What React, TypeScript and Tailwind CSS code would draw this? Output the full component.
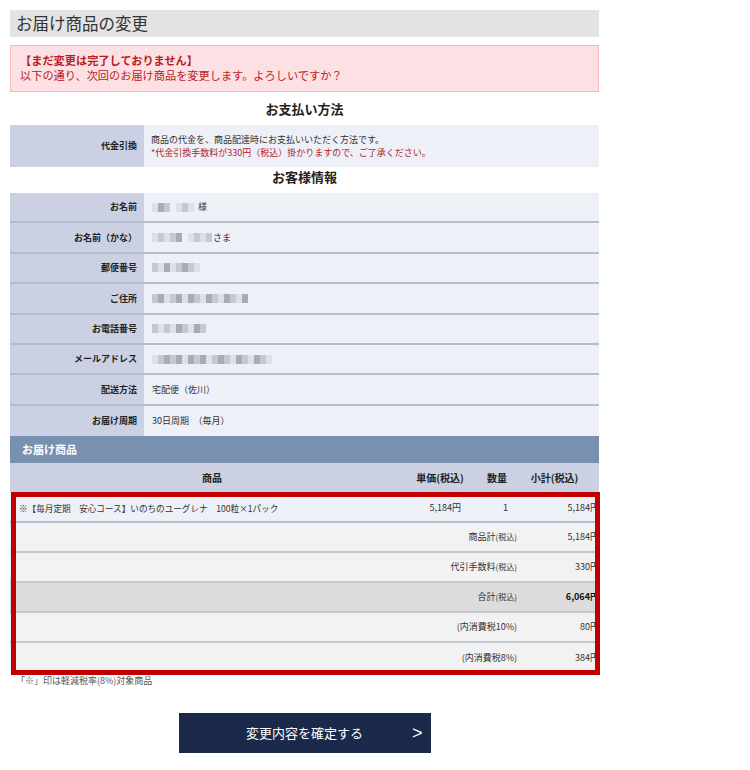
import React from "react"

const font = { fontFamily: '"Noto Sans CJK JP", "Noto Sans", sans-serif' }

// pixelated placeholder for masked personal data
function Masked({ cells }: { cells: string[] }) {
  return (
    <span className="inline-flex h-[9px] items-stretch">
      {cells.map((c, i) => (
        <span key={i} className={`w-[6px] ${c}`} />
      ))}
    </span>
  )
}

const L = "bg-[#dde0e8]"
const M = "bg-[#c4c8d3]"
const D = "bg-[#a7abb8]"
const N = "bg-transparent"

interface InfoRow {
  label: string
  value: React.ReactNode
}

const customer: InfoRow[] = [
  { label: "お名前", value: <><Masked cells={[L, D, M, N, L, M, L]} /><span className="ml-[4px]">様</span></> },
  { label: "お名前（かな）", value: <><Masked cells={[L, M, L, M, D, N, L, M, L, M]} /><span className="ml-[1px]">さま</span></> },
  { label: "郵便番号", value: <Masked cells={[M, L, D, L, M, D, M, L]} /> },
  { label: "ご住所", value: <Masked cells={[M, D, L, M, D, L, D, M, L, D, M, L, D, M, L, D]} /> },
  { label: "お電話番号", value: <Masked cells={[M, L, M, L, D, M, L, D, M]} /> },
  { label: "メールアドレス", value: <Masked cells={[L, M, D, M, D, L, D, M, D, L, M, D, M, L, D, M, L, D, M, L]} /> },
  { label: "配送方法", value: "宅配便（佐川）" },
  { label: "お届け周期", value: "30日周期　（毎月）" },
]

const summary = [
  { label: "商品計", tax: "(税込)", value: "5,184円", bg: "bg-[#f2f2f2]", bold: false },
  { label: "代引手数料", tax: "(税込)", value: "330円", bg: "bg-[#f2f2f2]", bold: false },
  { label: "合計", tax: "(税込)", value: "6,064円", bg: "bg-[#dcdcdc]", bold: true },
  { label: "(内消費税10%)", tax: "", value: "80円", bg: "bg-[#f2f2f2]", bold: false },
  { label: "(内消費税8%)", tax: "", value: "384円", bg: "bg-[#f2f2f2]", bold: false },
]

export default function App() {
  return (
    <div className="min-h-[770px] w-[750px] bg-white pt-[10px] text-[#333]" style={font}>
      <div className="ml-[10px] w-[589px]">
        <div className="flex h-[27px] items-center bg-[#e3e3e3] pl-[6px] text-[16.5px] leading-none text-[#333]">
          お届け商品の変更
        </div>

        <div className="mt-[8px] h-[47px] border border-[#f6b8bc] bg-[#fde0e3] pl-[9px] pt-[7px] text-[11.2px] leading-[15px] text-[#b81c22]">
          <p className="font-bold">【まだ変更は完了しておりません】</p>
          <p>以下の通り、次回のお届け商品を変更します。よろしいですか？</p>
        </div>

        <h2 className="flex h-[33px] items-center justify-center text-[13px] font-bold text-[#222]">お支払い方法</h2>

        <div className="flex h-[42px]">
          <div className="flex w-[134px] items-center justify-end bg-[#cbd1e3] pr-[7px] text-[9px] font-bold text-[#222]">
            代金引換
          </div>
          <div className="flex flex-1 flex-col justify-center bg-[#edf0f7] pl-[7px] text-[9px] leading-[13px]">
            <p>商品の代金を、商品配達時にお支払いいただく方法です。</p>
            <p className="text-[#b3232a]">*代金引換手数料が330円（税込）掛かりますので、ご了承ください。</p>
          </div>
        </div>

        <h2 className="flex h-[26px] items-center justify-center pb-[6px] text-[13px] font-bold text-[#222]">お客様情報</h2>

        <div>
          {customer.map((row, i) => (
            <div
              key={row.label}
              className={`flex h-[30.4px] ${i < customer.length - 1 ? "border-b-2 border-[#b5bccc]" : ""}`}
            >
              <div className="flex w-[134px] items-center justify-end bg-[#cbd1e3] pr-[7px] text-[9px] font-bold text-[#222]">
                {row.label}
              </div>
              <div className="flex flex-1 items-center bg-[#edf0f7] pl-[8px] text-[9px]">{row.value}</div>
            </div>
          ))}
        </div>

        <div className="flex h-[27px] items-center bg-[#7891b0] pl-[12px] text-[11px] font-bold text-white">
          お届け商品
        </div>

        <div className="relative">
          <div className="grid h-[29px] grid-cols-[400px_60px_50px_79px] items-center bg-[#cbd1e3] text-[10px] font-bold text-[#222]">
            <span className="pl-[4px] text-center">商品</span>
            <span className="text-center">単価(税込)</span>
            <span className="pl-[4px] text-center">数量</span>
            <span className="pr-[10px] text-center">小計(税込)</span>
          </div>

          <div className="grid h-[31px] grid-cols-[400px_60px_50px_79px] items-center border-b-2 border-[#b5bccc] bg-[#edf0f7] pt-[3px] text-[9px]">
            <span className="pl-[9px] text-[8.6px]">※【毎月定期　安心コース】いのちのユーグレナ　100粒×1パック</span>
            <span className="pr-[9px] text-right">5,184円</span>
            <span className="pr-[12px] text-right">1</span>
            <span className="text-right">5,184円</span>
          </div>

          {summary.map((row, i) => (
            <div
              key={row.label}
              className={`grid h-[30px] grid-cols-[510px_79px] items-center text-[9px] ${row.bg} ${i < summary.length - 1 ? "border-b-2 border-[#c3c7d0]" : ""}`}
            >
              <span className="pr-[3px] text-right">
                {row.label}
                {row.tax && <span className="text-[8px]">{row.tax}</span>}
              </span>
              <span className={`text-right ${row.bold ? "font-bold text-[#111]" : ""}`}>{row.value}</span>
            </div>
          ))}

          {/* red highlight frame laid over the product rows */}
          <div className="pointer-events-none absolute left-[1px] top-[29px] h-[183px] w-[589px] border-[5px] border-[#c00000]" />
        </div>

        <p className="mt-[1px] pl-[6px] text-[9px] leading-[14px] text-[#555]">「※」印は軽減税率(8%)対象商品</p>

        <div className="mt-[25px] flex justify-center">
          <button className="relative flex h-[40px] w-[252px] items-center justify-center bg-[#1b2a4b] text-[13px] text-white">
            変更内容を確定する
            <span
              className="absolute right-[8px] top-1/2 -translate-y-1/2 text-[18px] font-light leading-none"
              style={{ fontFamily: '"Liberation Sans", sans-serif' }}
            >
              &gt;
            </span>
          </button>
        </div>
      </div>
    </div>
  )
}
